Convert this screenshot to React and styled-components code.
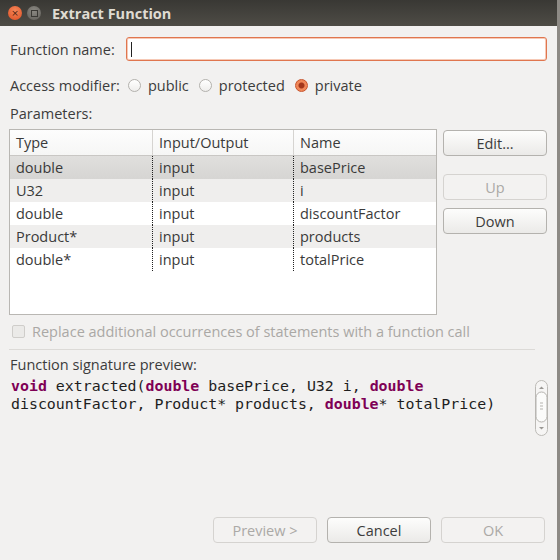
import React from 'react';
import styled, { createGlobalStyle } from 'styled-components';

const Global = createGlobalStyle`
  html, body { margin: 0; padding: 0; background: #f2f1f0; }
  body { font-family: "Open Sans", "DejaVu Sans", sans-serif; font-size: 14.5px; color: #3c3c3c; }
`;

const Window = styled.div`
  width: 560px;
  height: 560px;
  display: flex;
  flex-direction: column;
  background: #f2f1f0;
  border-right: 3px solid #8d8a85;
  box-sizing: border-box;
  overflow: hidden;
`;

const TitleBar = styled.div`
  height: 26px;
  flex: none;
  display: flex;
  align-items: center;
  padding-left: 8px;
  gap: 5px;
  background: linear-gradient(#393834, #4e4c46);
`;

const WinBtn = styled.div`
  width: 14px;
  height: 14px;
  border-radius: 50%;
  background: ${p => (p.close ? 'radial-gradient(circle at 50% 35%, #f4875a, #df4e22)' : 'radial-gradient(circle at 50% 35%, #8b8983, #5f5d58)')};
  display: flex;
  align-items: center;
  justify-content: center;
  color: ${p => (p.close ? '#4a1c0c' : '#3a3935')};
  font-size: 9px;
  font-family: "DejaVu Sans", sans-serif;
  line-height: 1;
`;

const Square = styled.div`
  width: 5px;
  height: 5px;
  border: 1px solid #3a3935;
`;

const Title = styled.div`
  margin-left: 6px;
  color: #dfdbd2;
  font-weight: bold;
  font-size: 14.5px;
`;

const Body = styled.div`
  flex: 1;
  display: flex;
  flex-direction: column;
  padding: 11px 10px 0 10px;
`;

const NameRow = styled.div`
  display: flex;
  align-items: center;
  height: 24px;
`;

const Label = styled.div`
  color: ${p => (p.dim ? '#aaa8a5' : '#3c3c3c')};
  white-space: nowrap;
`;

const TextInput = styled.div`
  margin-left: auto;
  width: 421px;
  height: 24px;
  box-sizing: border-box;
  border: 1px solid #e0764f;
  border-radius: 3px;
  background: #fff;
  box-shadow: inset 0 0 0 1px #f6c9b6;
  display: flex;
  align-items: center;
  padding-left: 4px;
`;

const Caret = styled.div`
  width: 1px;
  height: 15px;
  background: #222;
`;

const RadioRow = styled.div`
  display: flex;
  align-items: center;
  height: 22px;
  margin-top: 13px;
`;

const Radio = styled.div`
  width: 13px;
  height: 13px;
  box-sizing: border-box;
  border-radius: 50%;
  margin: 0 7px 0 ${p => p.gap}px;
  border: 1px solid ${p => (p.checked ? '#c8532b' : '#b3b1ad')};
  background: ${p => (p.checked ? 'radial-gradient(circle, #a3361a 0 2.5px, #f08758 3.5px)' : 'linear-gradient(#ffffff, #efeeec)')};
`;

const Section = styled.div`
  margin-top: ${p => p.mt}px;
  height: 18px;
  line-height: 18px;
`;

const ParamArea = styled.div`
  display: flex;
  gap: 6px;
  margin-top: 6px;
  margin-left: -1px;
`;

const Table = styled.div`
  width: 428px;
  height: 186px;
  box-sizing: border-box;
  border: 1px solid #b9b7b3;
  background: #fff;
  display: flex;
  flex-direction: column;
`;

const Cols = styled.div`
  display: grid;
  grid-template-columns: 142px 141px 1fr;
  height: ${p => (p.head ? 25 : 23)}px;
  flex: none;
  background: ${p => p.bg || '#fff'};
  border-bottom: ${p => (p.head ? '1px solid #c9c7c4' : 'none')};
`;

const Cell = styled.div`
  display: flex;
  align-items: center;
  padding-left: 6px;
  color: #3a3a3a;
  border-left: ${p => (p.first ? 'none' : p.head ? '1px solid #d6d4d1' : '1px dotted #222')};
`;

const Side = styled.div`
  display: flex;
  flex-direction: column;
  margin-top: 1px;
`;

const Button = styled.div`
  width: 104px;
  height: 26px;
  box-sizing: border-box;
  border-radius: 4px;
  display: flex;
  align-items: center;
  justify-content: center;
  margin-top: ${p => p.mt || 0}px;
  border: 1px solid ${p => (p.disabled ? '#d5d3d0' : '#b4b2ae')};
  background: ${p => (p.disabled ? '#f3f2f1' : 'linear-gradient(#fdfdfc, #ebeae8)')};
  color: ${p => (p.disabled ? '#aba9a6' : '#3c3c3c')};
`;

const CheckRow = styled.div`
  display: flex;
  align-items: center;
  margin-top: 8px;
  height: 16px;
  gap: 7px;
`;

const Check = styled.div`
  width: 13px;
  height: 13px;
  margin-left: 2px;
  box-sizing: border-box;
  border: 1px solid #cfcdca;
  border-radius: 2px;
  background: #ebeae8;
`;

const Separator = styled.div`
  height: 1px;
  background: #dcdad7;
  margin: 10px 12px 0 -1px;
`;

const PreviewArea = styled.div`
  display: flex;
  margin-top: 3px;
  height: 70px;
`;

const Code = styled.pre`
  margin: 0;
  flex: 1;
  font-family: "DejaVu Sans Mono", monospace;
  font-size: 14.9px;
  line-height: 18px;
  color: #1e1e1e;
  padding-left: 1px;
`;

const Kw = styled.span`
  color: #7f0055;
  font-weight: bold;
`;

const Scroll = styled.svg`
  flex: none;
  margin: 3px -1px 0 0;
`;

const Footer = styled.div`
  margin-top: auto;
  display: flex;
  justify-content: flex-end;
  gap: 10px;
  padding: 0 2px 17px 0;
`;

const rows = [
  ['double', 'input', 'basePrice', 'linear-gradient(#e0dfdd, #d6d5d3)'],
  ['U32', 'input', 'i', '#efeeed'],
  ['double', 'input', 'discountFactor', '#fff'],
  ['Product*', 'input', 'products', '#efeeed'],
  ['double*', 'input', 'totalPrice', '#fff'],
];

export default function App() {
  return (
    <Window>
      <Global />
      <TitleBar>
        <WinBtn close>×</WinBtn>
        <WinBtn><Square /></WinBtn>
        <Title>Extract Function</Title>
      </TitleBar>
      <Body>
        <NameRow>
          <Label>Function name:</Label>
          <TextInput><Caret /></TextInput>
        </NameRow>
        <RadioRow>
          <Label>Access modifier:</Label>
          <Radio gap={8} />
          <Label>public</Label>
          <Radio gap={10} />
          <Label>protected</Label>
          <Radio gap={10} checked />
          <Label>private</Label>
        </RadioRow>
        <Section mt={9}>Parameters:</Section>
        <ParamArea>
          <Table>
            <Cols head bg="linear-gradient(#fdfdfd, #f6f6f5)">
              <Cell first head>Type</Cell>
              <Cell head>Input/Output</Cell>
              <Cell head>Name</Cell>
            </Cols>
            {rows.map(r => (
              <Cols key={r[2]} bg={r[3]}>
                <Cell first>{r[0]}</Cell>
                <Cell>{r[1]}</Cell>
                <Cell>{r[2]}</Cell>
              </Cols>
            ))}
          </Table>
          <Side>
            <Button>Edit...</Button>
            <Button disabled mt={18}>Up</Button>
            <Button mt={8}>Down</Button>
          </Side>
        </ParamArea>
        <CheckRow>
          <Check />
          <Label dim>Replace additional occurrences of statements with a function call</Label>
        </CheckRow>
        <Separator />
        <Section mt={6}>Function signature preview:</Section>
        <PreviewArea>
          <Code>
            <Kw>void</Kw> extracted(<Kw>double</Kw> basePrice, U32 i, <Kw>double</Kw>{'\n'}
            discountFactor, Product* products, <Kw>double</Kw>* totalPrice)
          </Code>
          <Scroll width="13" height="56" viewBox="0 0 13 56">
            <rect x="0.5" y="0.5" width="12" height="55" rx="6" fill="#f6f5f4" stroke="#bcbab6" />
            <path d="M4 9 L6.5 6.5 L9 9 Z" fill="#9a9894" />
            <rect x="1" y="12" width="11" height="30" rx="5.5" fill="#fbfbfa" stroke="#b5b3af" />
            <path d="M5 23h3M5 26h3M5 29h3" stroke="#b5b3af" strokeWidth="1" />
            <path d="M4 47 L6.5 49.5 L9 47 Z" fill="#9a9894" />
          </Scroll>
        </PreviewArea>
        <Footer>
          <Button disabled>Preview &gt;</Button>
          <Button>Cancel</Button>
          <Button disabled>OK</Button>
        </Footer>
      </Body>
    </Window>
  );
}
